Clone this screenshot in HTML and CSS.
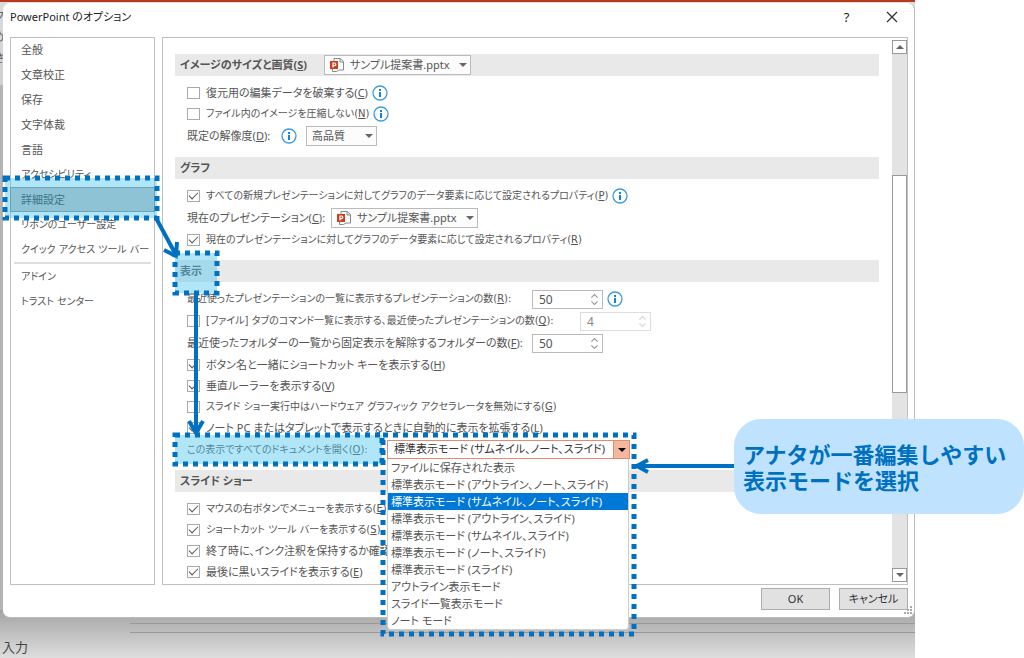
FILE: index.html
```html
<!DOCTYPE html>
<html lang="ja">
<head>
<meta charset="utf-8">
<title>PowerPoint のオプション</title>
<link rel="stylesheet" href="styles.css">
</head>
<body>
<svg class="defs" aria-hidden="true">
  <symbol id="info" viewBox="0 0 16 16"><circle cx="8" cy="8" r="7" fill="#fff" stroke="#3c9bdc" stroke-width="1.3"/><path d="M8 7v5M8 4v2" stroke="#1682d4" stroke-width="2"/></symbol>
  <symbol id="ppt" viewBox="0 0 16 16"><path d="M5 4V1.500h6L14.500 4.500V13H10M11 1.500V5h3.500M3.500 10v4.500h4L10 13" fill="#fff" stroke="#888"/><rect x="1" y="4" width="8" height="8" fill="#cc3d1c"/><path d="M4 10.500V6h1.500a1.300 1.300 0 0 1 0 2.600H4" fill="none" stroke="#fff" stroke-width="1.200"/></symbol>
  <symbol id="spin" viewBox="0 0 10 14"><path d="M1.500 5L5 1.500 8.500 5M1.500 9L5 12.500 8.500 9" fill="none" stroke="#999" stroke-width="1.200"/></symbol>
</svg>
<main class="stage">
  <div class="behind" aria-hidden="true"><span>ク</span><span>め</span><span>さ</span></div>
  <section class="dialog" aria-label="PowerPoint のオプション">
    <header class="titlebar">
      <h1>PowerPoint のオプション</h1>
      <button type="button" class="tool" aria-label="ヘルプ">?</button>
      <button type="button" class="tool" aria-label="閉じる"><svg width="12" height="12" viewBox="0 0 12 12"><path d="M1 1l10 10M11 1L1 11" stroke="#333" stroke-width="1.300"/></svg></button>
    </header>
    <div class="body">
      <nav class="nav">
        <button type="button">全般</button>
        <button type="button">文章校正</button>
        <button type="button">保存</button>
        <button type="button">文字体裁</button>
        <button type="button">言語</button>
        <button type="button" class="compact">アクセシビリティ</button>
        <div class="marked">
          <button type="button" class="selected">詳細設定</button>
          <svg class="mark mark-nav"><rect width="100%" height="100%"/></svg>
          <svg class="arrow arrow-nav" width="32" height="48" viewBox="0 0 32 48"><path d="M3 2L23 39M11 34L23 40 24 26"/></svg>
        </div>
        <button type="button" class="compact">リボンのユーザー設定</button>
        <button type="button" class="compact">クイック アクセス ツール バー</button>
        <hr>
        <button type="button" class="compact">アドイン</button>
        <button type="button" class="compact">トラスト センター</button>
      </nav>
      <div class="pane">
        <div class="options">
          <section>
            <h2><label for="file1">イメージのサイズと画質(<u>S</u>)</label>
              <span class="pick file"><svg><use href="#ppt"/></svg><select id="file1"><option>サンプル提案書.pptx</option></select></span></h2>
            <div class="row"><input type="checkbox" id="c1"><label for="c1">復元用の編集データを破棄する(<u>C</u>)</label><svg class="info"><use href="#info"/></svg></div>
            <div class="row"><input type="checkbox" id="c2"><label for="c2" class="compact">ファイル内のイメージを圧縮しない(<u>N</u>)</label><svg class="info"><use href="#info"/></svg></div>
            <div class="row tall"><label for="res" class="res-label">既定の解像度(<u>D</u>):</label><svg class="info"><use href="#info"/></svg><span class="pick res"><select id="res"><option>高品質</option></select></span></div>
          </section>
          <section>
            <h2>グラフ</h2>
            <div class="row"><input type="checkbox" id="c3" checked><label for="c3" class="compact">すべての新規プレゼンテーションに対してグラフのデータ要素に応じて設定されるプロパティ(<u>P</u>)</label><svg class="info"><use href="#info"/></svg></div>
            <div class="row tall"><label for="file2">現在のプレゼンテーション(<u>C</u>):</label><span class="pick file"><svg><use href="#ppt"/></svg><select id="file2"><option>サンプル提案書.pptx</option></select></span></div>
            <div class="row"><input type="checkbox" id="c4" checked><label for="c4" class="compact">現在のプレゼンテーションに対してグラフのデータ要素に応じて設定されるプロパティ(<u>R</u>)</label></div>
          </section>
          <section>
            <h2><span class="marked">表示
              <svg class="mark mark-head"><rect width="100%" height="100%"/></svg>
              <svg class="arrow arrow-head" width="20" height="144" viewBox="0 0 20 144"><path d="M10 0V138M3 128L10 140 17 128"/></svg></span></h2>
            <div class="row field"><label for="n1" class="compact count">最近使ったプレゼンテーションの一覧に表示するプレゼンテーションの数(<u>R</u>):</label><span class="spin"><input type="text" id="n1" value="50"><svg><use href="#spin"/></svg></span><svg class="info"><use href="#info"/></svg></div>
            <div class="row field"><input type="checkbox" id="c5"><label for="c5" class="compact quick">[ファイル] タブのコマンド一覧に表示する、最近使ったプレゼンテーションの数(<u>Q</u>):</label><span class="spin off"><input type="text" value="4" aria-label="コマンド一覧に表示する数" disabled><svg><use href="#spin"/></svg></span></div>
            <div class="row field"><label for="n3" class="count">最近使ったフォルダーの一覧から固定表示を解除するフォルダーの数(<u>F</u>):</label><span class="spin"><input type="text" id="n3" value="50"><svg><use href="#spin"/></svg></span></div>
            <div class="row"><input type="checkbox" id="c6" checked><label for="c6">ボタン名と一緒にショートカット キーを表示する(<u>H</u>)</label></div>
            <div class="row"><input type="checkbox" id="c7" checked><label for="c7">垂直ルーラーを表示する(<u>V</u>)</label></div>
            <div class="row"><input type="checkbox" id="c8"><label for="c8" class="compact">スライド ショー実行中はハードウェア グラフィック アクセラレータを無効にする(<u>G</u>)</label></div>
            <div class="row"><input type="checkbox" id="c9" checked><label for="c9">ノート PC またはタブレットで表示するときに自動的に表示を拡張する(<u>L</u>)</label></div>
            <div class="row field">
              <span class="marked view-label"><label for="view" class="compact">この表示ですべてのドキュメントを開く(<u>O</u>):</label><svg class="mark mark-label"><rect width="100%" height="100%"/></svg></span>
              <span class="pick view"><select id="view"><option>標準表示モード (サムネイル、ノート、スライド)</option></select>
                <span class="list" role="listbox" aria-label="表示モード">
                  <span role="option">ファイルに保存された表示</span>
                  <span role="option">標準表示モード (アウトライン、ノート、スライド)</span>
                  <span role="option" aria-selected="true">標準表示モード (サムネイル、ノート、スライド)</span>
                  <span role="option">標準表示モード (アウトライン、スライド)</span>
                  <span role="option">標準表示モード (サムネイル、スライド)</span>
                  <span role="option">標準表示モード (ノート、スライド)</span>
                  <span role="option">標準表示モード (スライド)</span>
                  <span role="option">アウトライン表示モード</span>
                  <span role="option">スライド一覧表示モード</span>
                  <span role="option">ノート モード</span>
                </span>
                <svg class="mark mark-list"><rect width="100%" height="100%"/></svg>
              </span>
            </div>
          </section>
          <section>
            <h2>スライド ショー</h2>
            <div class="row"><input type="checkbox" id="c10" checked><label for="c10" class="compact">マウスの右ボタンでメニューを表示する(<u>E</u>)</label></div>
            <div class="row"><input type="checkbox" id="c11" checked><label for="c11" class="compact">ショートカット ツール バーを表示する(<u>S</u>)</label></div>
            <div class="row"><input type="checkbox" id="c12" checked><label for="c12">終了時に、インク注釈を保持するか確認</label></div>
            <div class="row"><input type="checkbox" id="c13" checked><label for="c13">最後に黒いスライドを表示する(<u>E</u>)</label></div>
          </section>
        </div>
        <div class="scroll">
          <button type="button" class="up" aria-label="上へ"></button>
          <span class="before"></span><span class="thumb"></span><span class="after"></span>
          <button type="button" class="down" aria-label="下へ"></button>
        </div>
      </div>
    </div>
    <footer class="actions">
      <button type="button">OK</button>
      <button type="button">キャンセル</button>
      <svg class="grip" width="9" height="9" viewBox="0 0 9 9"><path d="M6 0h2v2H6zM3 3h2v2H3zM6 3h2v2H6zM0 6h2v2H0zM3 6h2v2H3zM6 6h2v2H6z" fill="#aaa"/></svg>
    </footer>
  </section>
  <div class="status">
    <div class="hscroll"></div>
    <p>入力</p>
  </div>
  <aside class="callout">アナタが一番編集しやすい<br>表示モードを選択
    <svg class="arrow arrow-call" width="100" height="20" viewBox="0 0 100 20"><path d="M100 10H5M14 4L3 10 14 16"/></svg>
  </aside>
</main>
</body>
</html>
```
FILE: styles.css
```css
* { box-sizing: border-box; }
body {
  margin: 0;
  background: #fff;
  color: #555;
  font: 11px/16px "Noto Sans", "Noto Sans CJK JP", sans-serif;
  font-feature-settings: "palt";
}
button, input, select { font: inherit; font-feature-settings: inherit; color: inherit; }
.defs { position: absolute; width: 0; height: 0; }
.compact { font-size: 10px; font-family: "DejaVu Sans", "Noto Sans CJK JP", sans-serif; }

.stage {
  position: relative;
  display: flex;
  flex-direction: column;
  min-height: 100vh;
  padding-right: 109px;
  background: linear-gradient(#b83a1c, #b83a1c) 0 0 / calc(100% - 109px) 2px no-repeat,
    linear-gradient(#dcdcdc 0, #d0d0d0 84px, #b4b4b4 86px, #b4b4b4 100%) 0 0 / calc(100% - 109px) 100% no-repeat;
}
.behind {
  position: absolute;
  top: 8px;
  left: 0;
  width: 4px;
  overflow: hidden;
  display: flex;
  flex-direction: column;
  align-items: flex-end;
  gap: 5px;
}

.dialog {
  position: relative;
  z-index: 1;
  margin: 3px 0 0 3px;
  background: #fff;
  border: 1px solid #bbb;
  border-width: 0 1px 1px 0;
  border-radius: 7px;
}
.titlebar { display: flex; align-items: center; height: 34px; padding: 0 10px 6px 7px; }
.titlebar h1 { flex: 1; margin: 0; font-size: 11px; font-weight: 400; color: #222; }
.tool { display: grid; place-items: center; width: 45px; height: 28px; padding: 0; border: 0; background: none; font-size: 13px; color: #222; }
.tool:last-child { margin-right: -10px; }

.body { display: flex; gap: 7px; padding: 0 6px 0 7px; }
.nav { width: 145px; flex: none; box-shadow: inset 0 0 0 1px #c0c0c0; }
.nav button {
  display: block;
  width: 100%;
  height: 25px;
  padding: 0 0 0 10px;
  border: 1px solid transparent;
  background: none;
  text-align: left;
  white-space: nowrap;
}
.nav .compact { font-size: 10px; font-family: "DejaVu Sans", "Noto Sans CJK JP", sans-serif; }
.nav .selected { background: #c0c0c0; border-color: #888; color: #333; }
.nav hr { height: 2px; margin: 0 4px; border: 0; background: #ddd; }

.pane { flex: 1; display: flex; min-width: 0; padding: 2px 0 2px 12px; border: 1px solid #c0c0c0; }
.options { flex: 1; min-width: 0; padding-top: 14px; margin-right: 13px; }
.options section + section { margin-top: 10px; }
.options h2 {
  display: flex;
  align-items: center;
  gap: 17px;
  height: 22px;
  margin: 0 0 6px;
  padding-left: 5px;
  background: #e9e9e9;
  font-size: 11px;
  font-weight: 700;
}
.row { display: flex; align-items: center; height: 21px; padding-left: 12px; white-space: nowrap; }
.row.field { height: 22px; }
.row.tall { height: 23px; }
.row input[type="checkbox"] {
  appearance: none;
  display: grid;
  place-items: center;
  flex: none;
  width: 13px;
  height: 12px;
  margin: 0 6px 0 0;
  border: 1px solid #aaa;
  background: #fff;
}
.row input[type="checkbox"]:checked::before {
  content: "";
  width: 8px;
  height: 4px;
  margin-bottom: 3px;
  border: solid #555;
  border-width: 0 0 1px 1px;
  transform: rotate(-45deg);
}
.info { flex: none; width: 16px; height: 16px; margin-left: 4px; }
.res-label { width: 90px; }
.count { min-width: 336px; }
.quick { min-width: 365px; }

.pick { position: relative; display: block; height: 20px; font-weight: 400; }
.pick select {
  appearance: none;
  width: 100%;
  height: 100%;
  padding: 0 20px 0 5px;
  border: 1px solid #bbb;
  border-radius: 0;
  background: #fcfcfc;
}
.pick::after {
  content: "";
  position: absolute;
  right: 4px;
  top: 8px;
  border: 4px solid transparent;
  border-top-color: #666;
  border-bottom: 0;
}
.file { width: 147px; }
.file select { padding-left: 25px; }
.file > svg { position: absolute; left: 5px; top: 2px; width: 16px; height: 16px; }
.row .file { margin-left: 6px; }
.res { width: 71px; margin-left: 9px; }

.spin { position: relative; width: 71px; height: 19px; margin-left: 9px; }
.spin input { display: block; width: 100%; height: 100%; padding: 0 20px 0 6px; border: 1px solid #bbb; background: #fff; font-size: 12px; }
.spin svg { position: absolute; right: 4px; top: 3px; width: 9px; height: 13px; }
.off input { border-color: #ddd; color: #888; }
.off svg { opacity: .4; }

.view-label { width: 200px; }
.view { width: 243px; height: 19px; z-index: 3; }
.view select { padding-left: 6px; border-color: #e8896c; color: #333; background: linear-gradient(90deg, transparent calc(100% - 16px), #e8896c 0, #e8896c calc(100% - 15px), #f5b79e 0) #fff; }
.view::after { border-top-color: #000; }
.list {
  position: absolute;
  z-index: 2;
  top: 19px;
  left: 0;
  width: 242px;
  background: #fff;
  border: 1px solid #ccc;
  border-top: 0;
  border-radius: 0 0 4px 4px;
}
.list span { display: block; height: 17px; padding-left: 3px; line-height: 17px; }
.list [aria-selected] { background: #0078d7; color: #fff; }

.scroll { display: flex; flex-direction: column; width: 15px; background: #e3e3e3; }
.scroll button { display: grid; place-items: center; height: 14px; padding: 0; border: 1px solid #999; background: #fff; }
.scroll button::before { content: ""; border: solid transparent; }
.scroll .up::before { border-width: 0 4px 4px; border-bottom-color: #666; }
.scroll .down::before { border-width: 4px 4px 0; border-top-color: #666; }
.before { flex: 122; }
.thumb { flex: 217; border: 1px solid #999; background: #fff; }
.after { flex: 176; }

.actions { position: relative; display: flex; justify-content: flex-end; gap: 9px; padding: 3px 6px 7px; }
.actions button { width: 69px; height: 22px; padding: 0; border: 1px solid #adadad; background: #e1e1e1; color: #333; }
.grip { position: absolute; right: 1px; bottom: 2px; }

.status { flex: 1; margin-top: -8px; padding-top: 8px; background: linear-gradient(#a4a4a4, #dedede); color: #444; }
.hscroll { height: 15px; border-bottom: 1px solid #999; background: linear-gradient(#999, #999) 0 5px / 100% 1px no-repeat; margin-left: 130px; }
.status p { margin: 6px 0 0 2px; font-size: 13px; line-height: 16px; }

.marked { position: relative; display: block; }
.mark { position: absolute; z-index: 2; overflow: visible; pointer-events: none; }
.mark rect { fill: rgb(76 199 240 / .44); stroke: #0070c0; stroke-width: 5; stroke-dasharray: 5 5; }
.mark-nav { left: -5px; top: -9px; width: 152px; height: 40px; }
.mark-head { left: -5px; top: -10px; width: 42px; height: 40px; }
.mark-label { left: -12px; top: -6px; width: 207px; height: 29px; }
.mark-list { left: -4px; top: -5px; width: 251px; height: 199px; }
.mark-list rect { fill: none; }
.arrow { position: absolute; z-index: 2; pointer-events: none; fill: none; stroke: #0070c0; stroke-width: 4; }
.arrow-nav { left: 143px; top: 29px; }
.arrow-head { left: 6px; top: 30px; }

.callout {
  position: absolute;
  z-index: 4;
  right: 0;
  top: 419px;
  width: 290px;
  padding: 21px 0 22px 9px;
  border-radius: 27px;
  background: #bfe3ff;
  color: #0070c0;
  font: 700 22px/26px "Noto Sans CJK JP", sans-serif;
  font-feature-settings: normal;
  white-space: nowrap;
}
.arrow-call { right: 100%; top: 37px; }
```
